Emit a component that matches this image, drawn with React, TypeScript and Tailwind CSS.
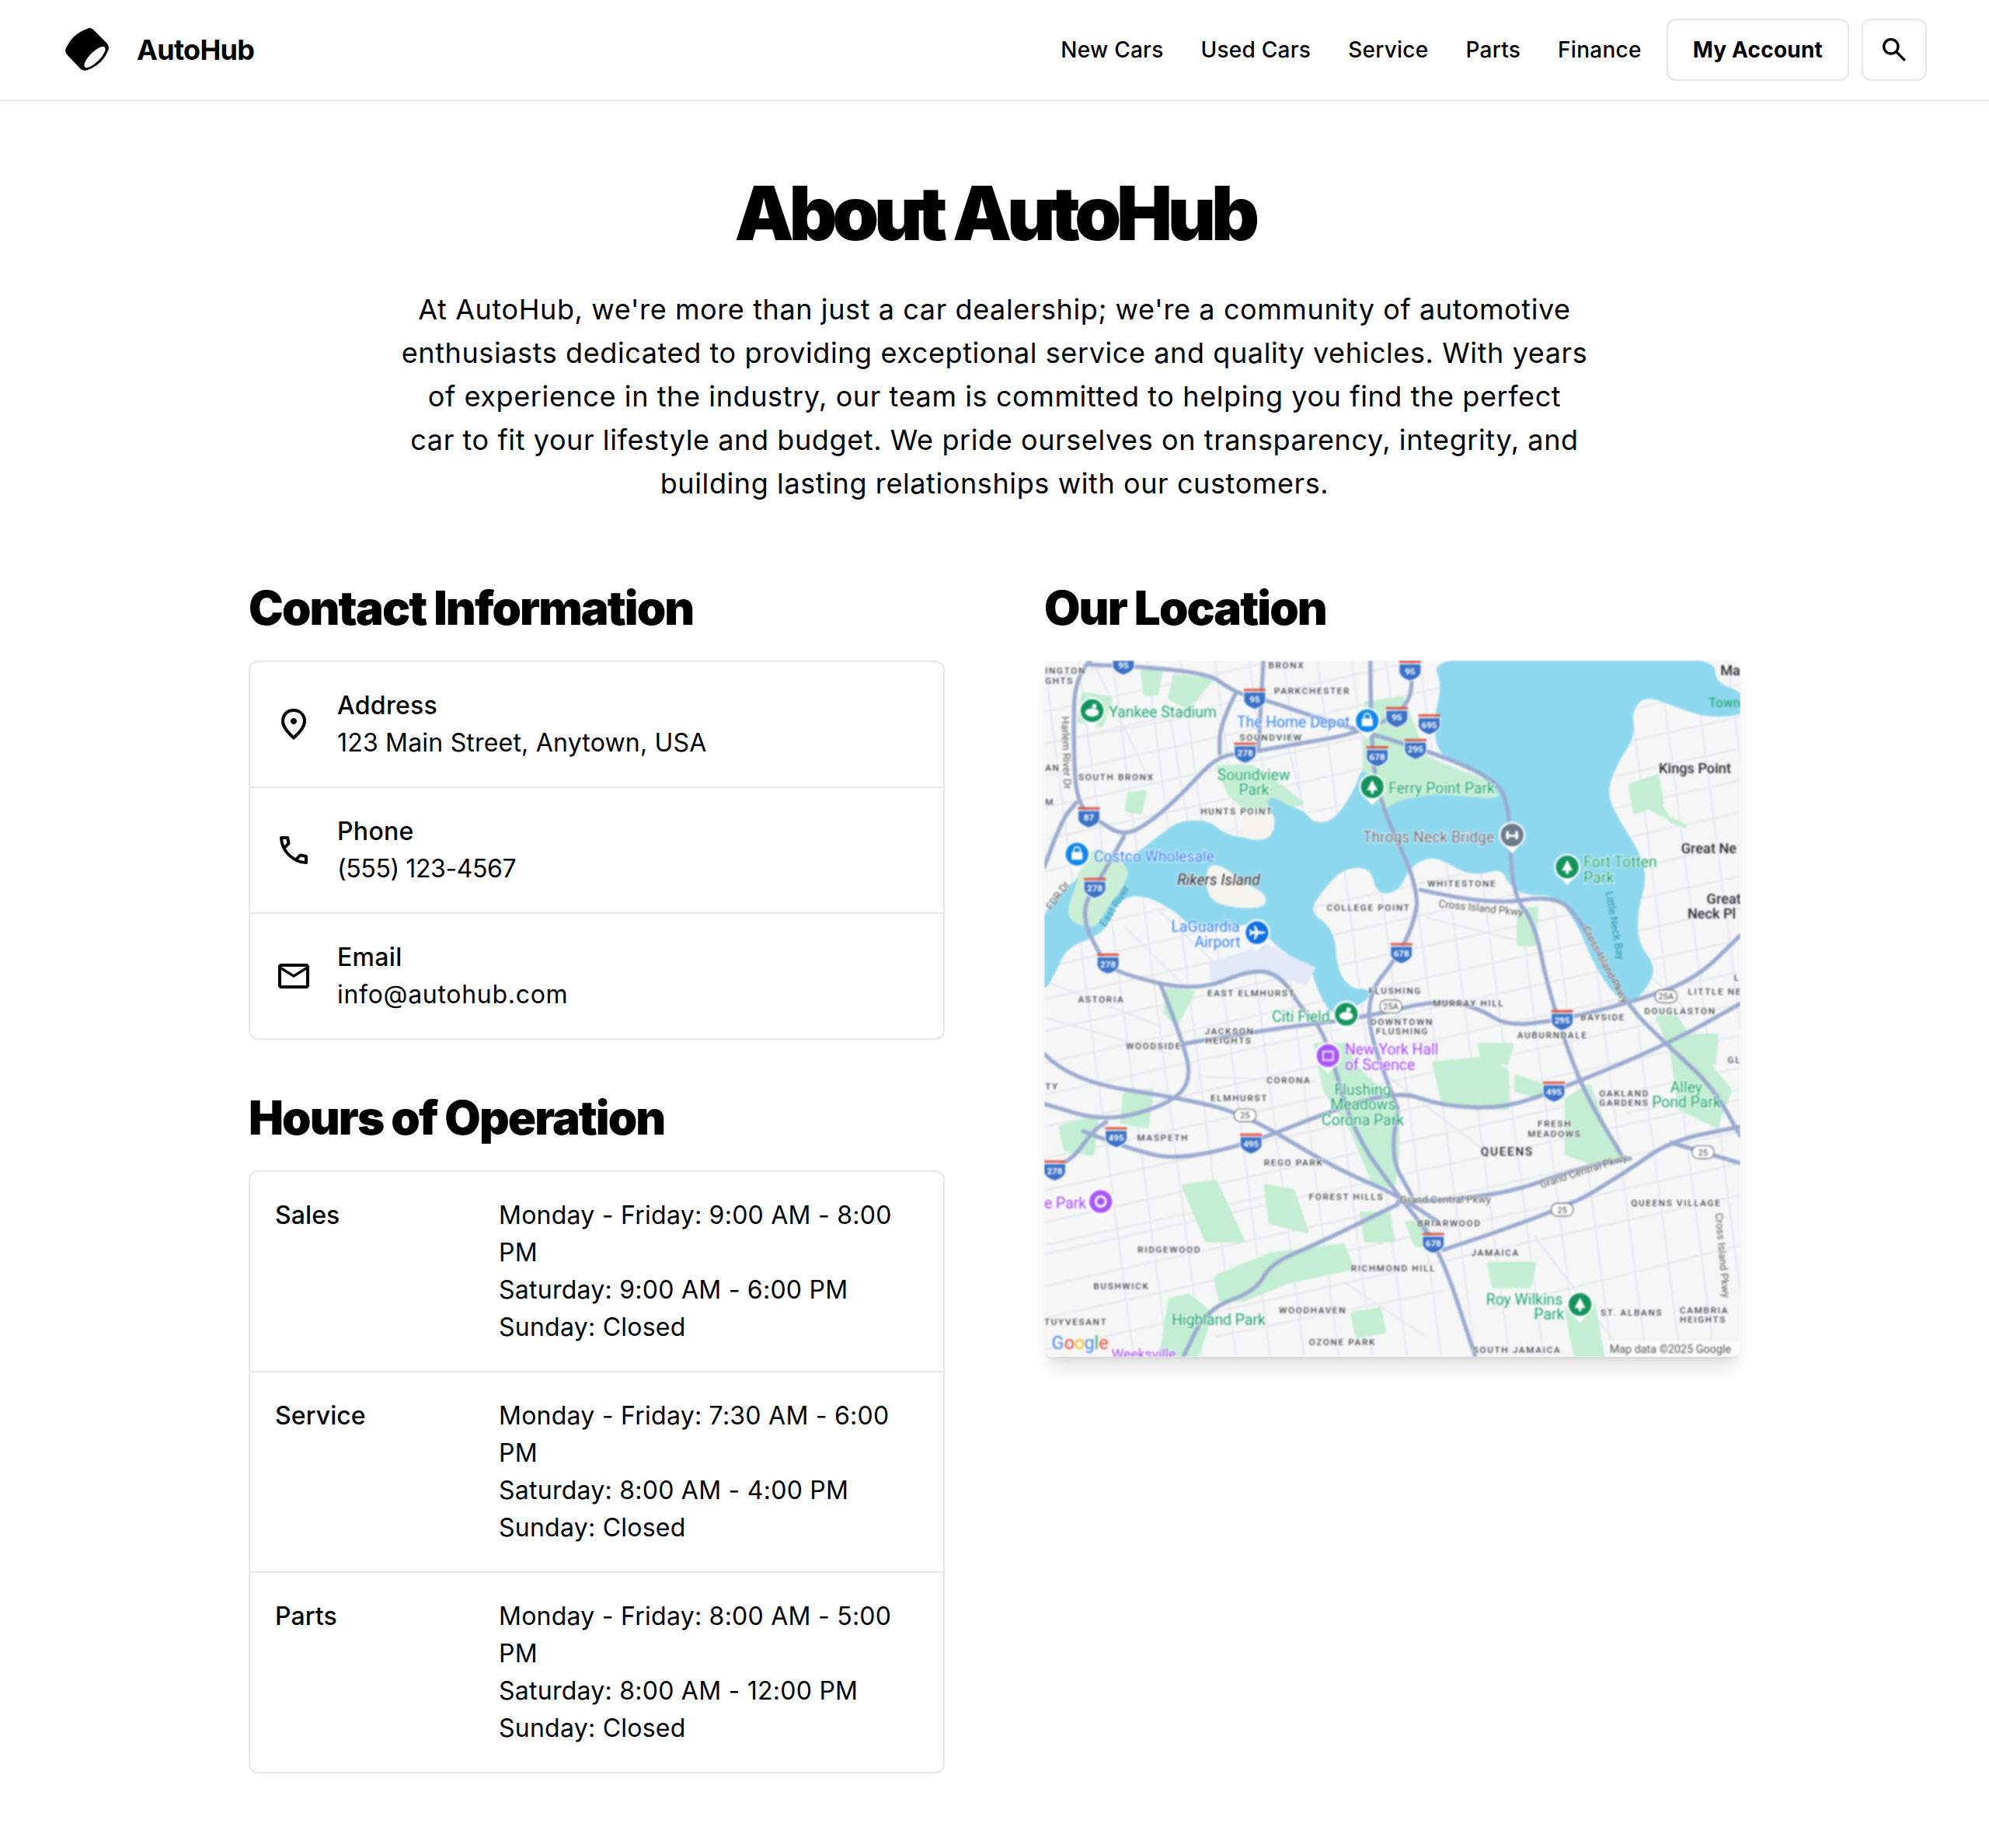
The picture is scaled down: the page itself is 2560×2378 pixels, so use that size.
const sans = "font-['Inter','Liberation_Sans',sans-serif]";

const navLinks = ["New Cars", "Used Cars", "Service", "Parts", "Finance"];

const contact = [
  {
    label: "Address",
    value: "123 Main Street, Anytown, USA",
    track: "tracking-[0.2px]",
    d: "M480-480q33 0 56.5-23.5T560-560q0-33-23.5-56.5T480-640q-33 0-56.5 23.5T400-560q0 33 23.5 56.5T480-480Zm0 294q122-112 181-203.5T720-560q0-109-69.5-174.5T480-800q-101 0-170.5 65.5T240-560q0 71 59 162.5T480-186Zm0 106Q319-217 239.5-334.5T160-560q0-150 96.5-239T480-880q127 0 223.5 89T800-560q0 108-79.5 225.5T480-80Zm0-480Z",
  },
  {
    label: "Phone",
    value: "(555) 123-4567",
    track: "tracking-[-0.4px]",
    d: "M798-120q-125 0-247-54.5T329-329Q229-429 174.5-551T120-798q0-18 12-30t30-12h162q14 0 25 9.5t13 22.5l26 140q2 16-1 27t-11 19l-97 98q20 37 47.5 71.5T387-386q31 31 65 57.5t72 48.5l94-94q9-9 23.5-13.5T670-390l138 28q14 4 23 14.5t9 23.5v162q0 18-12 30t-30 12ZM241-600l66-66-17-94h-89q5 41 14 81t26 79Zm358 358q39 17 79.5 27t81.5 13v-88l-94-19-67 67Z",
  },
  {
    label: "Email",
    value: "info@autohub.com",
    track: "tracking-[0.7px]",
    d: "M160-160q-33 0-56.5-23.5T80-240v-480q0-33 23.5-56.5T160-800h640q33 0 56.5 23.5T880-720v480q0 33-23.5 56.5T800-160H160Zm320-280L160-640v400h640v-400L480-440Zm0-80 320-200H160l320 200Z",
  },
];

const hours = [
  { name: "Sales", lines: ["Monday - Friday: 9:00 AM - 8:00", "PM", "Saturday: 9:00 AM - 6:00 PM", "Sunday: Closed"] },
  { name: "Service", lines: ["Monday - Friday: 7:30 AM - 6:00", "PM", "Saturday: 8:00 AM - 4:00 PM", "Sunday: Closed"] },
  { name: "Parts", lines: ["Monday - Friday: 8:00 AM - 5:00", "PM", "Saturday: 8:00 AM - 12:00 PM", "Sunday: Closed"] },
];

// rounds the corners of an "x,y x,y" polyline
function smooth(points: string, closed = false) {
  const p = points.trim().split(/\s+/).map((s) => s.split(",").map(Number));
  const mid = (a: number[], b: number[]) => `${(a[0] + b[0]) / 2},${(a[1] + b[1]) / 2}`;
  if (closed) {
    let d = `M${mid(p[p.length - 1], p[0])}`;
    p.forEach((pt, i) => {
      d += ` Q${pt[0]},${pt[1]} ${mid(pt, p[(i + 1) % p.length])}`;
    });
    return d + "Z";
  }
  let d = `M${p[0][0]},${p[0][1]}`;
  for (let i = 1; i < p.length - 1; i++) d += ` Q${p[i][0]},${p[i][1]} ${mid(p[i], p[i + 1])}`;
  return d + ` L${p[p.length - 1][0]},${p[p.length - 1][1]}`;
}

const water =
  "880,10 1490,10 1490,70 1560,95 1560,130 1480,135 1420,115 1340,85 1305,130 1315,180 1275,240 1250,310 1285,380 1325,440 1340,500 1320,560 1320,640 1360,690 1340,735 1300,770 1240,690 1200,590 1150,525 1080,525 1050,505 1030,465 960,485 880,435 820,465 800,515 760,525 745,465 680,465 635,510 595,570 655,610 660,700 695,745 745,745 680,785 655,785 625,725 619,693 517,625 505,575 454,595 346,595 324,567 250,525 190,530 160,585 140,615 68,641 40,705 14,745 14,575 130,475 210,461 244,435 284,404 324,375 386,375 415,404 471,415 511,404 531,364 517,319 545,336 591,353 613,381 665,375 716,296 727,251 760,365 790,335 880,315 960,325 1045,325 995,265 895,225 885,150 905,70";

const lands = [
  "380,466 415,466 454,500 511,528 511,557 460,562 403,551 380,528",
  "125,415 210,466 204,505 153,574 136,608 68,585 91,517",
  "460,340 530,345 530,395 500,415 440,400",
];

const parks = [
  "240,40 280,40 270,90 245,90",
  "310,50 390,60 340,120 300,100",
  "110,90 170,100 150,160 100,150",
  "405,250 480,250 540,290 590,330 540,340 470,345 430,310",
  "730,110 810,100 860,230 1010,290 1030,325 880,320 790,345 760,370 725,330",
  "110,470 210,470 190,530 130,590 75,600 70,560",
  "295,740 350,745 315,815 290,790",
  "210,310 245,305 235,350 205,345",
  "1130,490 1200,470 1210,550 1150,530",
  "1065,565 1105,560 1100,640 1065,640",
  "620,860 690,860 700,900 800,1000 800,1100 790,1170 750,1170 700,1050 640,960",
  "880,900 1000,890 1040,920 1040,1000 900,990",
  "980,860 1050,860 1040,900 985,895",
  "1060,930 1120,950 1110,975 1060,960",
  "1170,980 1220,950 1260,1060 1300,1110 1230,1120 1170,1100",
  "1370,800 1410,800 1480,900 1530,960 1500,1040 1420,1000 1400,870",
  "1440,840 1500,840 1495,900 1445,890",
  "1310,290 1370,270 1380,330 1320,350",
  "60,1040 140,1020 130,1100 70,1090",
  "200,970 260,960 250,1040 195,1030",
  "330,1170 400,1160 460,1290 380,1290",
  "510,1170 570,1180 600,1270 520,1250",
  "400,1370 520,1320 680,1300 700,1350 560,1380 460,1420 410,1420",
  "300,1420 340,1410 390,1450 360,1544 280,1544",
  "820,1250 860,1250 880,1300 840,1300",
  "1000,1340 1100,1340 1090,1390 1010,1390",
  "1170,1440 1230,1430 1250,1544 1190,1544",
  "700,1450 760,1440 770,1490 710,1500",
  "720,1230 780,1230 790,1290 730,1290",
  "1345,290 1400,370 1430,380 1350,340",
];

const majorRoads = [
  "125,17 91,51 88,187 94,329 142,369 199,403 261,369 335,301 403,227 471,219 585,199 716,176 830,120 830,17",
  "125,26 369,34 443,88 505,102 613,139 716,170 880,220 1000,270 1045,320 1050,530 1100,590 1130,740 1200,950 1290,1100",
  "505,17 494,216",
  "443,91 409,159 409,221",
  "740,17 740,130 750,310 850,520 830,610 790,680 740,740 735,830 800,1000",
  "850,520 1000,555 1150,530 1210,600 1300,770 1390,860 1490,950 1552,1060",
  "24,470 60,370 94,329",
  "199,403 148,494 102,568 148,670 187,704 358,744 483,693 545,710 591,784 640,830 700,1050 800,1190 890,1300 970,1544",
  "280,730 320,830 350,935 300,990 160,1030 24,990",
  "320,860 490,830 730,800 890,760 980,780 1040,820 1160,805 1300,770 1450,720 1552,620",
  "24,880 80,940 340,980 470,1015 660,1130 800,1190 890,1250",
  "110,1050 240,1100 330,1110 480,1075 640,1010 800,960 900,995 1030,1000 1150,960 1390,860 1552,770",
  "24,1140 80,1120 130,1050 160,1030",
  "900,1310 1160,1225 1300,1140 1400,1070 1552,1040",
  "800,1205 1000,1200 1200,1130 1310,1110",
  "1400,1075 1552,1120",
  "800,1210 640,1290 520,1340 490,1400 380,1440 330,1544",
  "800,1010 780,1100 830,1190",
];

// street grid laid out in slanted rows
const minorRoads = [
  ...Array.from({ length: 22 }, (_, i) => `M24,${60 + i * 70} L1552,${-120 + i * 70 - 160}`),
  ...Array.from({ length: 22 }, (_, i) => `M${24 + i * 75},17 L${220 + i * 75},1544`),
  "M24,200 L400,130", "M130,17 L260,290", "M300,140 L340,380", "M560,210 L590,330", "M860,580 L1100,640",
  "M200,600 L340,740", "M270,560 L420,700", "M24,720 L280,820", "M24,800 L300,880", "M360,930 L620,940",
  "M740,900 L1000,1100", "M1000,1440 L1552,1300", "M24,1300 L520,1190", "M680,1380 L860,1500", "M400,1500 L900,1400",
  "M1100,1280 L1300,1544", "M1280,640 L1430,780", "M1300,1010 L1552,960",
];

const shields = [
  [198, 25, "95"], [827, 38, "95"], [486, 100, "95"], [798, 140, "95"], [869, 156, "695"], [839, 210, "295"],
  [465, 218, "278"], [755, 226, "678"], [122, 360, "87"], [135, 515, "278"], [808, 658, "678"], [164, 681, "278"],
  [1161, 805, "295"], [1143, 962, "495"], [182, 1062, "495"], [478, 1076, "495"], [47, 1135, "278"], [878, 1294, "678"],
] as [number, number, string][];

const ovals = [
  [785, 776, "25A"], [1389, 754, "25A"], [465, 1015, "25"], [1470, 1096, "25"], [1161, 1222, "25"],
] as [number, number, string][];

const grayLabels = [
  [516, 34, "BRONX"], [529, 90, "PARKCHESTER"], [453, 192, "SOUNDVIEW"], [99, 279, "SOUTH BRONX"], [367, 355, "HUNTS POINT"],
  [865, 514, "WHITESTONE"], [644, 566, "COLLEGE POINT"], [98, 768, "ASTORIA"], [382, 753, "EAST ELMHURST"], [736, 749, "FLUSHING"],
  [877, 776, "MURRAY HILL"], [1201, 807, "BAYSIDE"], [1062, 845, "AUBURNDALE"], [740, 816, "DOWNTOWN"], [752, 837, "FLUSHING"],
  [376, 837, "JACKSON"], [378, 858, "HEIGHTS"], [203, 870, "WOODSIDE"], [512, 945, "CORONA"], [389, 984, "ELMHURST"],
  [1242, 973, "OAKLAND"], [1242, 994, "GARDENS"], [1107, 1041, "FRESH"], [1085, 1062, "MEADOWS"], [228, 1071, "MASPETH"],
  [506, 1125, "REGO PARK"], [605, 1201, "FOREST HILLS"], [843, 1258, "BRIARWOOD"], [961, 1324, "JAMAICA"], [1312, 1215, "QUEENS VILLAGE"],
  [229, 1317, "RIDGEWOOD"], [697, 1358, "RICHMOND HILL"], [132, 1397, "BUSHWICK"], [539, 1449, "WOODHAVEN"], [605, 1520, "OZONE PARK"],
  [965, 1537, "SOUTH JAMAICA"], [1245, 1455, "ST. ALBANS"], [1419, 1449, "CAMBRIA"], [1419, 1470, "HEIGHTS"], [24, 1475, "TUYVESANT"],
  [1437, 751, "LITTLE NE"], [1341, 793, "DOUGLASTON"], [26, 46, "INGTON"], [26, 68, "GHTS"], [26, 260, "AN"], [26, 335, "M"],
  [26, 958, "TY"], [1524, 900, "GL"], [1538, 720, "L"],
] as [number, number, string][];

const greenLabels = [
  [166, 142, "Yankee Stadium"], [404, 279, "Soundview"], [451, 312, "Park"], [780, 309, "Ferry Point Park"],
  [1208, 470, "Fort Totten"], [1208, 504, "Park"], [524, 810, "Citi Field"], [661, 970, "Flushing"],
  [652, 1003, "Meadows"], [633, 1036, "Corona Park"], [1398, 965, "Alley"], [1358, 998, "Pond Park"],
  [994, 1430, "Roy Wilkins"], [1099, 1463, "Park"], [304, 1475, "Highland Park"],
] as [number, number, string][];

const blueLabels = [
  [447, 164, "The Home Depot"], [133, 458, "Costco Wholesale"], [303, 613, "LaGuardia"], [354, 646, "Airport"],
] as [number, number, string][];

const pins = [
  [129, 127, "#12925c", "stadium"], [733, 149, "#0f86ea", "bag"], [744, 294, "#12925c", "tree"], [96, 442, "#0f86ea", "bag"],
  [1051, 400, "#6b7a8a", "bridge"], [1172, 470, "#12925c", "tree"], [491, 614, "#0f6fe0", "plane"], [687, 793, "#12925c", "stadium"],
  [647, 884, "#a855f7", "museum"], [148, 1204, "#a855f7", "art"], [1200, 1430, "#12925c", "tree"],
] as [number, number, string, string][];

function PinGlyph({ x, y, kind }: { x: number; y: number; kind: string }) {
  if (kind === "tree")
    return <path d={`M${x},${y - 15} L${x + 12},${y + 8} L${x + 3},${y + 8} L${x + 3},${y + 15} L${x - 3},${y + 15} L${x - 3},${y + 8} L${x - 12},${y + 8}Z`} fill="#fff" />;
  if (kind === "bag")
    return (
      <g>
        <rect x={x - 12} y={y - 5} width="24" height="17" rx="2" fill="#fff" />
        <path d={`M${x - 7},${y - 5} v-4 a7,7 0 0 1 14,0 v4`} fill="none" stroke="#fff" strokeWidth="3" />
      </g>
    );
  if (kind === "plane")
    return <path d={`M${x},${y - 19} Q${x + 3},${y - 17} ${x + 3},${y - 8} L${x + 3},${y - 3} L${x + 15},${y + 3} L${x + 15},${y + 7} L${x + 3},${y + 4} L${x + 3},${y + 11} L${x + 7},${y + 14} L${x + 7},${y + 17} L${x},${y + 15} L${x - 7},${y + 17} L${x - 7},${y + 14} L${x - 3},${y + 11} L${x - 3},${y + 4} L${x - 15},${y + 7} L${x - 15},${y + 3} L${x - 3},${y - 3} L${x - 3},${y - 8} Q${x - 3},${y - 17} ${x},${y - 19}Z`} fill="#fff" transform={`rotate(90 ${x} ${y})`} />;
  if (kind === "stadium")
    return (
      <g fill="#fff">
        <ellipse cx={x} cy={y + 4} rx="15" ry="9" />
        <circle cx={x + 5} cy={y - 10} r="5" />
      </g>
    );
  if (kind === "bridge")
    return (
      <g fill="#fff">
        <rect x={x - 13} y={y - 9} width="6" height="18" />
        <rect x={x + 7} y={y - 9} width="6" height="18" />
        <rect x={x - 14} y={y - 1} width="28" height="5" />
      </g>
    );
  if (kind === "museum")
    return <rect x={x - 11} y={y - 9} width="22" height="19" fill="none" stroke="#fff" strokeWidth="3" />;
  return <circle cx={x} cy={y} r="11" fill="none" stroke="#fff" strokeWidth="5" />;
}

// static map drawn in the coordinates of a 1528 square
function MapPicture() {
  return (
    <svg viewBox="24 17 1528 1528" className="block w-full h-full blur-[0.8px]">
      <rect x="24" y="17" width="1528" height="1528" fill="#f6f6f7" />
      {minorRoads.map((d, i) => (
        <path key={i} d={d} fill="none" stroke="#e4e6ec" strokeWidth="3" />
      ))}
      {parks.map((d, i) => (
        <polygon key={i} points={d} fill="#c3eed3" stroke="#c3eed3" strokeWidth="8" strokeLinejoin="round" />
      ))}
      <path d={smooth(water, true)} fill="#8ed8ef" stroke="#8ed8ef" strokeWidth="14" strokeLinejoin="round" />
      {lands.map((d, i) => (
        <path key={i} d={smooth(d, true)} fill={i === 1 ? "#cdeed6" : "#f6f4ee"} />
      ))}
      <path d="M385,680 L510,640 L620,690 L600,730 L480,700 L390,735Z" fill="#e2e8f8" />
      {majorRoads.map((d, i) => (
        <path key={i} d={smooth(d)} fill="none" stroke="#9babd0" strokeWidth="9" strokeLinecap="round" />
      ))}
      {shields.map(([x, y, t], i) => (
        <g key={i}>
          <path d={`M${x - 24},${y - 14} L${x + 24},${y - 14} L${x + 24},${y + 6} Q${x + 20},${y + 18} ${x},${y + 24} Q${x - 20},${y + 18} ${x - 24},${y + 6}Z`} fill="#3b72c6" stroke="#fff" strokeWidth="2" />
          <rect x={x - 24} y={y - 21} width="48" height="5" fill="#d9503f" />
          <text x={x} y={y + 9} textAnchor="middle" fontSize="20" fontWeight="700" fill="#fff" fontFamily="Roboto, sans-serif">
            {t}
          </text>
        </g>
      ))}
      {ovals.map(([x, y, t], i) => (
        <g key={i}>
          <rect x={x - 24} y={y - 14} width="48" height="28" rx="13" fill="#fff" stroke="#5f6368" strokeWidth="2" />
          <text x={x} y={y + 7} textAnchor="middle" fontSize="19" fill="#444" fontFamily="Roboto, sans-serif">
            {t}
          </text>
        </g>
      ))}
      <g fontFamily="Roboto, sans-serif" fontSize="20" fontWeight="500" letterSpacing="2.8" fill="#3c4043" stroke="#fff" strokeWidth="3" paintOrder="stroke">
        {grayLabels.map(([x, y, t], i) => (
          <text key={i} x={x} y={y}>
            {t}
          </text>
        ))}
      </g>
      <g fontFamily="Roboto, sans-serif" fontSize="33" fill="#16a06a" stroke="#fff" strokeWidth="3" paintOrder="stroke">
        {greenLabels.map(([x, y, t], i) => (
          <text key={i} x={x} y={y}>
            {t}
          </text>
        ))}
      </g>
      <g fontFamily="Roboto, sans-serif" fontSize="33" fill="#2f7de8" stroke="#fff" strokeWidth="3" paintOrder="stroke">
        {blueLabels.map(([x, y, t], i) => (
          <text key={i} x={x} y={y}>
            {t}
          </text>
        ))}
      </g>
      <g fontFamily="Roboto, sans-serif" fontSize="31" fontWeight="500" fill="#202124" stroke="#fff" strokeWidth="3" paintOrder="stroke">
        <text x="1373" y="264">Kings Point</text>
        <text x="1422" y="440">Great Ne</text>
        <text x="1478" y="551">Great</text>
        <text x="1436" y="584">Neck Pl</text>
        <text x="1508" y="50">Ma</text>
        <text x="316" y="509" fontStyle="italic" fontWeight="400" fontSize="33">Rikers Island</text>
        <text x="982" y="1103" fontSize="26" letterSpacing="3">QUEENS</text>
      </g>
      <text x="1482" y="120" fontFamily="Roboto, sans-serif" fontSize="29" fill="#16a06a">Town</text>
      <text x="723" y="416" fontFamily="Roboto, sans-serif" fontSize="33" fill="#5f6b78" stroke="#fff" strokeWidth="3" paintOrder="stroke">Throgs Neck Bridge</text>
      <g fontFamily="Roboto, sans-serif" fontSize="33" fill="#a142f4" stroke="#fff" strokeWidth="3" paintOrder="stroke">
        <text x="684" y="882">New York Hall</text>
        <text x="684" y="915">of Science</text>
        <text x="24" y="1219">e Park</text>
        <text x="172" y="1550" fontSize="30">Weeksville</text>
      </g>
      <g fontFamily="Roboto, sans-serif" fontSize="23" fill="#555" stroke="#fff" strokeWidth="2" paintOrder="stroke">
        <text x="889" y="558" transform="rotate(6 889 558)">Cross Island Pkwy</text>
        <text x="805" y="1208">Grand Central Pkwy</text>
        <text x="1115" y="1175" transform="rotate(-18 1115 1175)">Grand Central Pkwy</text>
        <text x="1205" y="605" transform="rotate(62 1205 605)">Cross Island Pkwy</text>
        <text x="62" y="140" transform="rotate(88 62 140)">Harlem River Dr</text>
        <text x="40" y="566" transform="rotate(-55 40 566)">FDR Dr</text>
        <text x="1497" y="1230" transform="rotate(85 1497 1230)">Cross Island Pkwy</text>
      </g>
      <text x="158" y="603" transform="rotate(-58 158 603)" fontFamily="Roboto, sans-serif" fontSize="23" fill="#2b8fb0">East River</text>
      <text x="1256" y="525" transform="rotate(80 1256 525)" fontFamily="Roboto, sans-serif" fontSize="23" fill="#2b8fb0">Little Neck Bay</text>
      {pins.map(([x, y, c, kind], i) => (
        <g key={i}>
          <path d={`M${x - 24},${y + 14} L${x},${y + 40} L${x + 24},${y + 14}Z`} fill="#fff" />
          <circle cx={x} cy={y} r="29" fill="#fff" />
          <circle cx={x} cy={y} r="25" fill={c} />
          <PinGlyph x={x} y={y} kind={kind} />
        </g>
      ))}
      <g fontFamily="Roboto, sans-serif" fontSize="40" stroke="#fff" strokeWidth="2" paintOrder="stroke">
        <text x="40" y="1528" fill="#4285f4">G</text>
        <text x="68" y="1528" fill="#ea4335">o</text>
        <text x="90" y="1528" fill="#fbbc05">o</text>
        <text x="112" y="1528" fill="#4285f4">g</text>
        <text x="134" y="1528" fill="#34a853">l</text>
        <text x="144" y="1528" fill="#ea4335">e</text>
      </g>
      <rect x="1260" y="1510" width="292" height="35" fill="#fff" opacity="0.7" />
      <text x="1265" y="1536" fontFamily="Roboto, sans-serif" fontSize="24.5" fill="#555">Map data ©2025 Google</text>
    </svg>
  );
}

function Icon({ d }: { d: string }) {
  return (
    <svg viewBox="0 -960 960 960" className="w-12 h-12 shrink-0" fill="currentColor">
      <path d={d} />
    </svg>
  );
}

function Logo() {
  return (
    <svg viewBox="80 32 64 64" className="w-16 h-16 shrink-0">
      <path d="M115 36 Q118 36 120 38 L137 55 Q141 59 139.5 64 Q133 82 113 90 Q108 92 104 89 L86 70 Q83 66 85 62 Q93 44 112 37 Z" fill="#000" />
      <ellipse cx="122" cy="73.5" rx="18" ry="6.5" transform="rotate(-45 122 73.5)" fill="#fff" />
    </svg>
  );
}

export default function App() {
  return (
    <div className={`${sans} min-h-screen bg-white text-black`}>
      {/* Header */}
      <header className="flex items-center justify-between h-[130px] px-20 border-b-2 border-[#e5e7eb]">
        <div className="flex items-center gap-8">
          <Logo />
          <span className="text-[36px] font-bold tracking-[-0.7px]">AutoHub</span>
        </div>
        <nav className="flex items-center">
          <div className="flex items-center gap-12 mr-8">
            {navLinks.map((link) => (
              <a key={link} className="text-[28px] font-medium tracking-[0.25px]">
                {link}
              </a>
            ))}
          </div>
          <button className="h-20 px-8 rounded-xl border-2 border-[#e5e7eb] text-[28px] font-bold tracking-[0.2px]">
            My Account
          </button>
          <button className="flex items-center justify-center h-20 w-[84px] ml-4 rounded-xl border-2 border-[#e5e7eb]">
            <svg viewBox="0 -960 960 960" className="w-10 h-10" fill="currentColor">
              <path d="M784-120 532-372q-30 24-69 38t-83 14q-109 0-184.5-75.5T120-580q0-109 75.5-184.5T380-840q109 0 184.5 75.5T640-580q0 44-14 83t-38 69l252 252-56 56ZM380-400q75 0 127.5-52.5T560-580q0-75-52.5-127.5T380-760q-75 0-127.5 52.5T200-580q0 75 52.5 127.5T380-400Z" />
            </svg>
          </button>
        </nav>
      </header>

      <main className="w-[1920px] mx-auto py-24">
        {/* About */}
        <h1 className="text-center text-[96px] leading-[96px] font-black tracking-[-6.25px]">About AutoHub</h1>
        <p className="mt-12 text-center text-[36px] leading-[56px] tracking-[0.6px] whitespace-nowrap">
          At AutoHub, we're more than just a car dealership; we're a community of automotive
          <br />
          enthusiasts dedicated to providing exceptional service and quality vehicles. With years
          <br />
          of experience in the industry, our team is committed to helping you find the perfect
          <br />
          car to fit your lifestyle and budget. We pride ourselves on transparency, integrity, and
          <br />
          building lasting relationships with our customers.
        </p>

        <div className="grid grid-cols-2 gap-x-32 mt-24">
          <div>
            <h2 className="text-[60px] leading-[72px] font-black tracking-[-1.9px]">Contact Information</h2>
            <div className="mt-8 rounded-xl border-2 border-[#e5e7eb] divide-y-2 divide-[#e5e7eb]">
              {contact.map((item) => (
                <div key={item.label} className="flex items-center gap-8 p-8">
                  <Icon d={item.d} />
                  <div className="text-[32px] leading-[48px]">
                    <div className="font-medium tracking-[0.3px]">{item.label}</div>
                    <div className={item.track}>{item.value}</div>
                  </div>
                </div>
              ))}
            </div>

            <h2 className="mt-16 text-[60px] leading-[72px] font-black tracking-[-1.9px]">Hours of Operation</h2>
            <div className="mt-8 rounded-xl border-2 border-[#e5e7eb] divide-y-2 divide-[#e5e7eb]">
              {hours.map((row) => (
                <div key={row.name} className="flex p-8 text-[32px] leading-[48px]">
                  <div className="w-[288px] shrink-0 font-medium tracking-[0.1px]">{row.name}</div>
                  <div className="tracking-[0.25px] whitespace-nowrap">
                    {row.lines.map((line) => (
                      <div key={line}>{line}</div>
                    ))}
                  </div>
                </div>
              ))}
            </div>
          </div>

          <div>
            <h2 className="text-[60px] leading-[72px] font-black tracking-[-1.9px]">Our Location</h2>
            <div className="mt-8 w-[896px] h-[896px] rounded-xl overflow-hidden shadow-xl">
              <MapPicture />
            </div>
          </div>
        </div>
      </main>
    </div>
  );
}
